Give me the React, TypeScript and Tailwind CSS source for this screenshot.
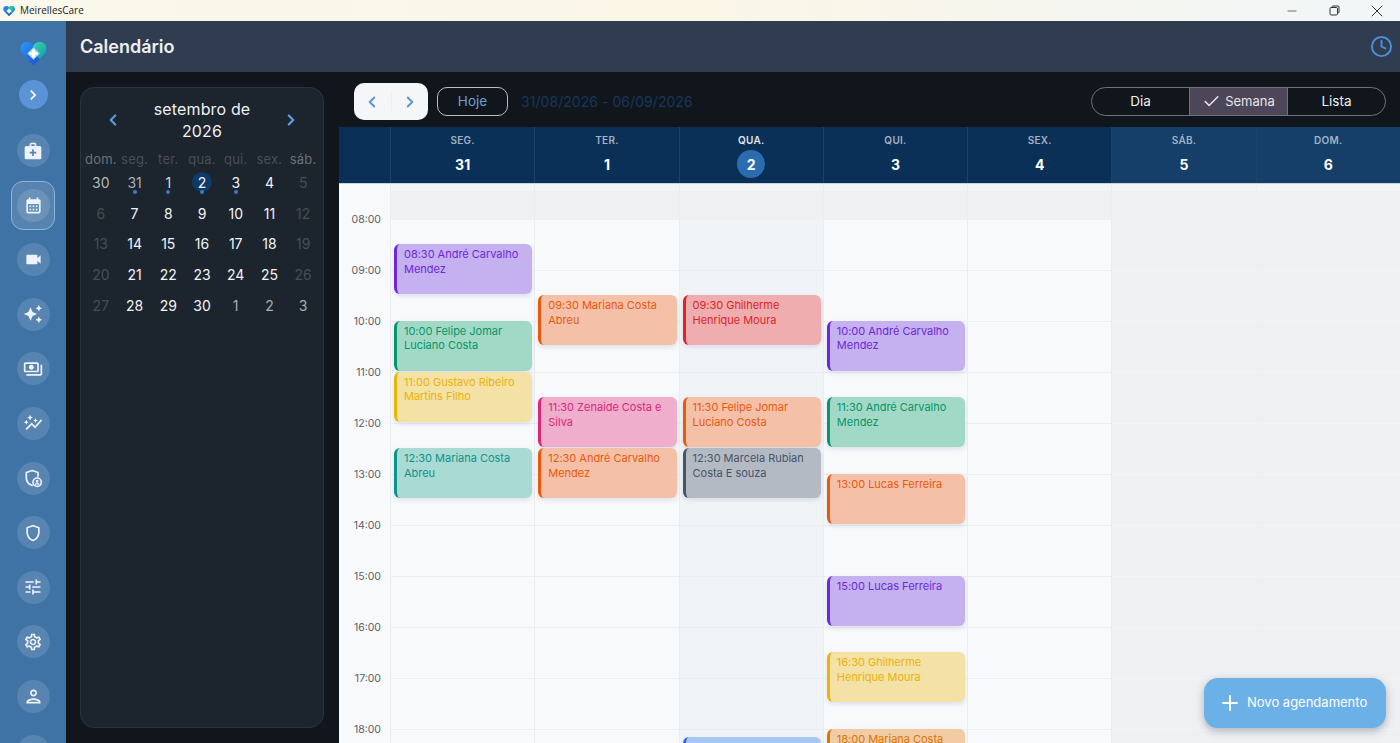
import React from "react";
import { ChevronLeft, ChevronRight, Clock, Check, Plus, Minus, X } from "lucide-react";
import {
  MdMedicalServices,
  MdCalendarMonth,
  MdVideocam,
  MdAutoAwesome,
  MdOutlinePayments,
  MdAutoGraph,
  MdTune,
  MdOutlineSettings,
  MdOutlineShield,
  MdOutlinePerson,
  MdChevronRight,
} from "react-icons/md";

function Logo({ size }: { size: number }) {
  return (
    <svg width={size} height={size} viewBox="0 0 28 26">
      <defs>
        <linearGradient id="lg1" x1="0" y1="0" x2="1" y2="1">
          <stop offset="0" stopColor="#2b9af5" />
          <stop offset="1" stopColor="#1746c8" />
        </linearGradient>
        <linearGradient id="lg2" x1="0" y1="0" x2="1" y2="1">
          <stop offset="0" stopColor="#3ad6b4" />
          <stop offset="1" stopColor="#109aa8" />
        </linearGradient>
      </defs>
      <path d="M14 25.5 L2.5 13.5 C-1.5 9 .5 2 6.5 1.2 C9.5 .8 12 2 14 4.5 C16 2 18.5 .8 21.5 1.2 C27.5 2 29.5 9 25.5 13.5Z" fill="url(#lg1)" />
      <path d="M14 4.5 C16 2 18.5 .8 21.5 1.2 C27.5 2 29.5 9 25.5 13.5 L20.5 18.7 L13 11Z" fill="url(#lg2)" />
      <path d="M14 6.5 L20.5 13 L14 19.5 L7.5 13Z" fill="#a9dcf8" />
      <path d="M12.4 8.8h3.2v2.6h2.6v3.2h-2.6v2.6h-3.2v-2.6H9.8v-3.2h2.6z" fill="#ffffff" />
    </svg>
  );
}

function ShieldUser() {
  return (
    <svg width="20" height="20" viewBox="0 0 24 24" fill="none" stroke="#eef2fb" strokeWidth="2" strokeLinecap="round" strokeLinejoin="round">
      <path d="M11 21c-3.8-1.2-7-4.6-7-9.5V5.5L11 3l7 2.5V10" />
      <circle cx="17" cy="17" r="5" fill="#6089b3" />
      <circle cx="17" cy="15.8" r="1.1" strokeWidth="1.4" />
      <path d="M14.8 19.6c.8-1.2 3.6-1.2 4.4 0" strokeWidth="1.4" />
    </svg>
  );
}

const navIcons: { el: React.ReactNode; active?: boolean }[] = [
  { el: <MdMedicalServices size={20} color="#eef2fb" /> },
  { el: <MdCalendarMonth size={19} color="#eef2fb" />, active: true },
  { el: <MdVideocam size={19} color="#eef2fb" /> },
  { el: <MdAutoAwesome size={20} color="#eef2fb" /> },
  { el: <MdOutlinePayments size={20} color="#eef2fb" /> },
  { el: <MdAutoGraph size={20} color="#eef2fb" /> },
  { el: <ShieldUser /> },
  { el: <MdOutlineShield size={20} color="#eef2fb" /> },
  { el: <MdTune size={20} color="#eef2fb" /> },
  { el: <MdOutlineSettings size={20} color="#eef2fb" /> },
  { el: <MdOutlinePerson size={21} color="#eef2fb" /> },
  { el: <MdOutlinePerson size={21} color="#eef2fb" /> },
];

function Sidebar() {
  return (
    <aside className="w-[66px] shrink-0 bg-[#3f72a5] flex flex-col items-center overflow-hidden">
      <div className="mt-[20px] h-[24px] flex items-center justify-center">
        <Logo size={27} />
      </div>
      <button className="mt-[15px] w-[29px] h-[29px] rounded-full bg-[#5a94d6] flex items-center justify-center shrink-0">
        <MdChevronRight size={20} color="#ffffff" />
      </button>
      <div className="mt-[25px] flex flex-col items-center gap-[21.6px]">
        {navIcons.map((n, i) => (
          <div key={i} className="w-[44px] h-[33px] flex items-center justify-center relative">
            {n.active && (
              <span className="absolute left-0 top-[-8px] w-[44px] h-[49px] rounded-[12px] border border-[#8fb4da] bg-[#ffffff1f]" />
            )}
            <span className="relative w-[33px] h-[33px] rounded-full bg-[#ffffff21] flex items-center justify-center">
              {n.el}
            </span>
          </div>
        ))}
      </div>
    </aside>
  );
}

type DayT = { d: number; c: string; dot?: boolean; sel?: boolean };
const W = "text-[#f2f4f6]";
const D = "text-[#474d54]";
const G = "text-[#a9adb2]";
const rows: DayT[][] = [
  [
    { d: 30, c: "text-[#b4b7bb]" },
    { d: 31, c: "text-[#a9adb2]", dot: true },
    { d: 1, c: "text-[#d8dadd]", dot: true },
    { d: 2, c: W, dot: true, sel: true },
    { d: 3, c: W, dot: true },
    { d: 4, c: W },
    { d: 5, c: D },
  ],
  [{ d: 6, c: D }, ...[7, 8, 9, 10, 11].map((d) => ({ d, c: W })), { d: 12, c: D }],
  [{ d: 13, c: D }, ...[14, 15, 16, 17, 18].map((d) => ({ d, c: W })), { d: 19, c: D }],
  [{ d: 20, c: D }, ...[21, 22, 23, 24, 25].map((d) => ({ d, c: W })), { d: 26, c: D }],
  [{ d: 27, c: D }, ...[28, 29, 30].map((d) => ({ d, c: W })), { d: 1, c: G }, { d: 2, c: G }, { d: 3, c: G }],
];
const weekdays = ["dom.", "seg.", "ter.", "qua.", "qui.", "sex.", "sáb."];

function MiniCalendar() {
  return (
    <div className="w-[273px] shrink-0 bg-[#10161c] pl-[14px] pr-[15px] pt-[15px] pb-[15px] h-full">
      <div className="w-[244px] h-[641px] rounded-[14px] border border-[#2a3440] bg-[#1c242e] px-[3px] pt-[10px]">
        <div className="flex items-center h-[44px] px-[20px]">
          <ChevronLeft size={18} color="#5b9bdc" strokeWidth={3} />
          <div className="flex-1 text-center text-[16px] leading-[22px] tracking-[0.15px] text-[#eef0f2]">
            setembro de
            <br />
            2026
          </div>
          <ChevronRight size={18} color="#5b9bdc" strokeWidth={3} />
        </div>
        <div className="grid grid-cols-7 mt-[8px] h-[16px] items-center">
          {weekdays.map((w, i) => (
            <div key={w} className={`text-center text-[13px] tracking-[0.2px] ${i === 0 || i === 6 ? "text-[#6c7177]" : "text-[#484e55]"}`}>
              {w}
            </div>
          ))}
        </div>
        <div className="mt-[1px]">
          {rows.map((r, ri) => (
            <div key={ri} className="grid grid-cols-7 h-[30.75px]">
              {r.map((c, ci) => (
                <div key={ci} className={`relative flex items-center justify-center text-[14px] ${c.c}`}>
                  <span className={`w-[20px] h-[20px] rounded-full flex items-center justify-center ${c.sel ? "bg-[#0d3a66]" : ""}`}>{c.d}</span>
                  {c.dot && <span className="absolute left-1/2 -translate-x-1/2 top-[23px] w-[4px] h-[4px] rounded-full bg-[#3b7cc4]" />}
                </div>
              ))}
            </div>
          ))}
        </div>
      </div>
    </div>
  );
}

function Toolbar() {
  return (
    <div className="h-[55px] shrink-0 bg-[#10161c] flex items-center pl-[15px] pr-[14px] pt-[4px]">
      <div className="w-[74px] h-[37px] rounded-[10px] bg-[#f4f6f8] flex items-center">
        <span className="flex-1 flex justify-center border-r border-[#ebedf0]">
          <ChevronLeft size={18} color="#5b93d3" strokeWidth={2.5} />
        </span>
        <span className="flex-1 flex justify-center">
          <ChevronRight size={18} color="#5b93d3" strokeWidth={2.5} />
        </span>
      </div>
      <button className="ml-[9px] w-[71px] h-[29px] rounded-[10px] border border-[#b9bdc2] text-[13.5px] text-[#6c9fd6] flex items-center justify-center">
        Hoje
      </button>
      <span className="ml-[13px] text-[14px] tracking-[0.05px] text-[#16365a]">31/08/2026 - 06/09/2026</span>
      <div className="ml-auto w-[295px] h-[29px] rounded-full border border-[#6f7378] flex overflow-hidden text-[13.5px] text-[#eef0f2]">
        <span className="w-[97px] flex items-center justify-center">Dia</span>
        <span className="w-[99px] flex items-center justify-center gap-[4px] text-[13px] bg-[#4d4658] border-x border-[#6f7378] text-[#e6e4ea]">
          <Check size={19} strokeWidth={2} />
          Semana
        </span>
        <span className="flex-1 flex items-center justify-center">Lista</span>
      </div>
    </div>
  );
}

const headers = [
  { w: "SEG.", d: "31" },
  { w: "TER.", d: "1" },
  { w: "QUA.", d: "2", today: true },
  { w: "QUI.", d: "3" },
  { w: "SEX.", d: "4" },
  { w: "SÁB.", d: "5", we: true },
  { w: "DOM.", d: "6", we: true },
];

function DayHeader() {
  return (
    <div className="h-[57px] shrink-0 flex bg-[#0b3058] border-b border-[#c5d3e0]">
      <div className="w-[52px] shrink-0 border-r border-[#1d436b]" />
      {headers.map((h) => (
        <div key={h.w} className={`flex-1 flex flex-col items-center border-r border-[#1d436b] last:border-r-0 ${h.we ? "bg-[#153f68]" : ""}`}>
          <span className={`mt-[6px] h-[14px] leading-[14px] text-[10px] font-semibold tracking-[0.3px] ${h.today ? "text-[#dfe6ee]" : "text-[#a3b2c3]"}`}>{h.w}</span>
          <span className={`mt-[3px] w-[28px] h-[28px] rounded-full flex items-center justify-center text-[14px] font-bold text-white ${h.today ? "bg-[#2a6cb0]" : ""}`}>
            {h.d}
          </span>
        </div>
      ))}
    </div>
  );
}

type Ev = { day: number; start: number; text: string; bg: string; txt: string; bar: string };
const C = {
  purple: { bg: "bg-[#c2adeef2]", txt: "text-[#6d28d9]", bar: "border-[#6d28d9]" },
  green: { bg: "bg-[#9dd7c3f2]", txt: "text-[#059669]", bar: "border-[#059669]" },
  yellow: { bg: "bg-[#f3dfa0f2]", txt: "text-[#eab308]", bar: "border-[#eab308]" },
  teal: { bg: "bg-[#a5d8d2f2]", txt: "text-[#0d9488]", bar: "border-[#0d9488]" },
  orange: { bg: "bg-[#f3bea3f2]", txt: "text-[#ea580c]", bar: "border-[#ea580c]" },
  pink: { bg: "bg-[#eeaac9f2]", txt: "text-[#db2777]", bar: "border-[#db2777]" },
  red: { bg: "bg-[#eea9acf2]", txt: "text-[#dc2626]", bar: "border-[#dc2626]" },
  slate: { bg: "bg-[#b0b6c0f2]", txt: "text-[#475569]", bar: "border-[#475569]" },
  blue: { bg: "bg-[#a0c4f1f2]", txt: "text-[#2563eb]", bar: "border-[#2563eb]" },
  amber: { bg: "bg-[#efc89ff2]", txt: "text-[#d97706]", bar: "border-[#d97706]" },
};
const ev = (day: number, start: number, text: string, c: keyof typeof C): Ev => ({ day, start, text, ...C[c] });
const events: Ev[] = [
  ev(0, 8.5, "08:30 André Carvalho Mendez", "purple"),
  ev(0, 10, "10:00 Felipe Jomar Luciano Costa", "green"),
  ev(0, 11, "11:00 Gustavo Ribeiro Martins Filho", "yellow"),
  ev(0, 12.5, "12:30 Mariana Costa Abreu", "teal"),
  ev(1, 9.5, "09:30 Mariana Costa Abreu", "orange"),
  ev(1, 11.5, "11:30 Zenaide Costa e Silva", "pink"),
  ev(1, 12.5, "12:30 André Carvalho Mendez", "orange"),
  ev(2, 9.5, "09:30 Ghilherme Henrique Moura", "red"),
  ev(2, 11.5, "11:30 Felipe Jomar Luciano Costa", "orange"),
  ev(2, 12.5, "12:30 Marcela Rubian Costa E souza", "slate"),
  ev(2, 18.17, "", "blue"),
  ev(3, 10, "10:00 André Carvalho Mendez", "purple"),
  ev(3, 11.5, "11:30 André Carvalho Mendez", "green"),
  ev(3, 13, "13:00 Lucas Ferreira", "orange"),
  ev(3, 15, "15:00 Lucas Ferreira", "purple"),
  ev(3, 16.5, "16:30 Ghilherme Henrique Moura", "yellow"),
  ev(3, 18, "18:00 Mariana Costa", "amber"),
];
const hours = Array.from({ length: 11 }, (_, i) => 8 + i);

function Column({ day }: { day: number }) {
  const weekend = day >= 5;
  const today = day === 2;
  const body = weekend ? "bg-[#eff0f2]" : today ? "bg-[#f1f4f7]" : "bg-[#f7f9fb]";
  const line = weekend ? "border-[#f3f4f5]" : "border-[#ebeef1]";
  return (
    <div className={`flex-1 relative ${day < 6 ? "border-r" : ""} ${weekend ? "border-[#eff0f2]" : "border-[#ebeef1]"}`}>
      <div className="h-[7px] bg-[#f4f5f6]" />
      <div className="h-[29px] bg-[#eff0f2]" />
      {hours.map((h) => (
        <div key={h} className={`h-[51px] border-b ${body} ${line}`} />
      ))}
      {events
        .filter((e) => e.day === day)
        .map((e) => (
          <div
            key={e.text + e.start}
            className={`absolute left-[3px] right-[2px] h-[50px] rounded-[6px] overflow-hidden border-l-[3px] shadow-[0_2px_5px_rgba(60,80,120,0.14)] ${e.bg} ${e.bar}`}
            style={{ top: 34.5 + (e.start - 8) * 51 }}
          >
            <p className={`pl-[7px] pr-[6px] pt-[3px] text-[11px] leading-[14.7px] tracking-[-0.02px] ${e.txt}`}>{e.text}</p>
          </div>
        ))}
    </div>
  );
}

function Grid() {
  return (
    <div className="flex-1 min-h-0 flex overflow-hidden relative bg-[#f7f9fb]">
      <div className="w-[52px] shrink-0 bg-[#f7f9fb] border-r border-[#ebeef1] pt-[10px] text-[10.5px] text-[#5a6068]">
        {hours.map((h) => (
          <div key={h} className="h-[51px] flex items-center justify-end pr-[9px]">
            {String(h).padStart(2, "0")}:00
          </div>
        ))}
      </div>
      {[0, 1, 2, 3, 4, 5, 6].map((d) => (
        <Column key={d} day={d} />
      ))}
      <button className="absolute right-[14px] bottom-[15px] w-[182px] h-[50px] rounded-[14px] bg-[#6cb0e8] shadow-[0_3px_8px_rgba(40,60,90,0.35)] flex items-center pl-[14px] gap-[5px] text-[13px] text-white">
        <Plus size={24} strokeWidth={2} />
        Novo agendamento
      </button>
    </div>
  );
}

export default function App() {
  return (
    <div className="w-[1400px] h-[743px] overflow-hidden flex flex-col font-['Inter',sans-serif] bg-[#10161c]">
      <div className="h-[21px] shrink-0 bg-gradient-to-r from-[#faf8ec] via-[#fbf6e6] to-[#f1f6f8] flex items-center">
        <span className="ml-[3px] flex"><Logo size={12} /></span>
        <span className="ml-[5px] text-[10px] text-[#1a1a1a] font-['Open_Sans',sans-serif]">MeirellesCare</span>
        <div className="ml-auto flex items-center text-[#333]">
          <span className="w-[42px] flex justify-center"><Minus size={14} strokeWidth={1.2} /></span>
          <span className="w-[42px] flex justify-center">
            <svg width="11" height="11" viewBox="0 0 11 11" fill="none" stroke="#333" strokeWidth="1">
              <rect x="1" y="2.5" width="7.5" height="7.5" rx="1.2" />
              <path d="M3 2.5V2a1 1 0 0 1 1-1h5a1 1 0 0 1 1 1v5a1 1 0 0 1-1 1h-.5" />
            </svg>
          </span>
          <span className="w-[45px] flex justify-center pr-[2px]"><X size={20} strokeWidth={1.2} /></span>
        </div>
      </div>
      <div className="flex-1 min-h-0 flex">
        <Sidebar />
        <div className="flex-1 min-w-0 flex flex-col">
          <header className="h-[51px] shrink-0 bg-[#303d50] flex items-center justify-between pl-[14px] pr-[7px]">
            <h1 className="text-[18px] font-semibold text-[#eef1f4]">Calendário</h1>
            <Clock size={23} color="#4a8fd8" strokeWidth={2} />
          </header>
          <div className="flex-1 min-h-0 flex">
            <MiniCalendar />
            <div className="flex-1 min-w-0 flex flex-col">
              <Toolbar />
              <DayHeader />
              <Grid />
            </div>
          </div>
        </div>
      </div>
    </div>
  );
}
